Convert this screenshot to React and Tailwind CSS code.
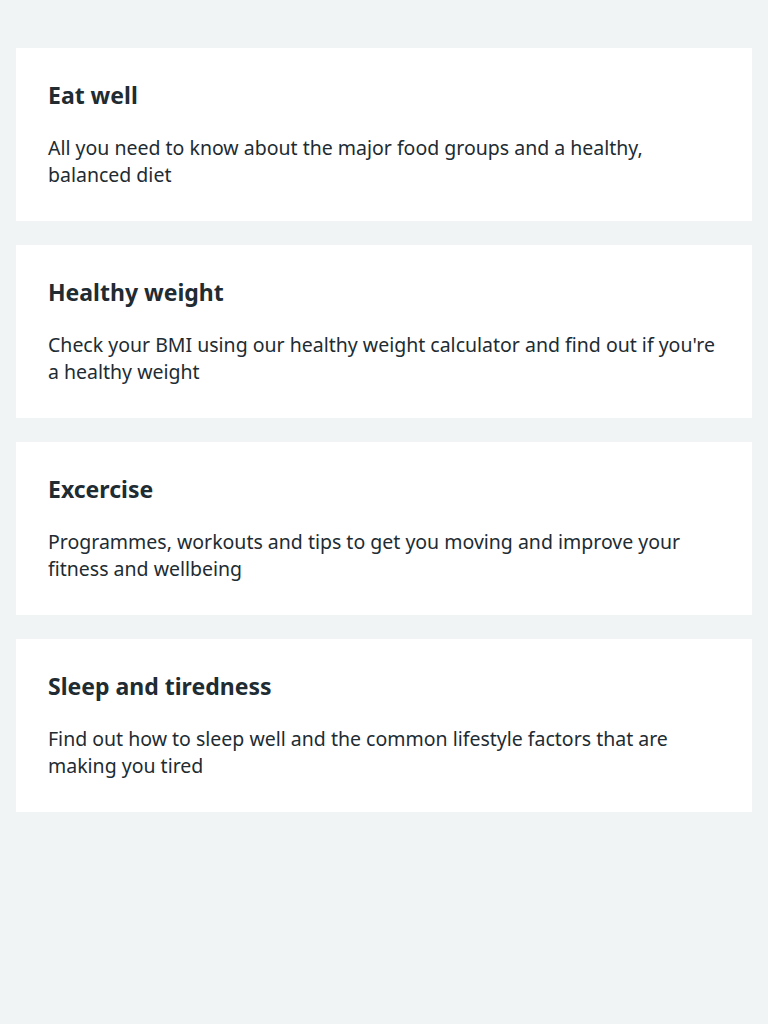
import React from "react";

const cards = [
  {
    title: "Eat well",
    text: "All you need to know about the major food groups and a healthy, balanced diet",
  },
  {
    title: "Healthy weight",
    text: "Check your BMI using our healthy weight calculator and find out if you're a healthy weight",
  },
  {
    title: "Excercise",
    text: "Programmes, workouts and tips to get you moving and improve your fitness and wellbeing",
  },
  {
    title: "Sleep and tiredness",
    text: "Find out how to sleep well and the common lifestyle factors that are making you tired",
  },
];

export default function App() {
  return (
    <div
      className="min-h-screen bg-[#f0f4f5] px-4 pt-12 text-[#212b32]"
      style={{ fontFamily: '"Noto Sans", Arial, sans-serif' }}
    >
      <div className="flex flex-col gap-6">
        {cards.map((card) => (
          <div key={card.title} className="bg-white px-8 pt-8 pb-[33px]">
            <h2 className="mb-[23px] text-[23px] font-bold leading-[31px]">{card.title}</h2>
            <p className="text-[19.5px] leading-[27px]">{card.text}</p>
          </div>
        ))}
      </div>
    </div>
  );
}
